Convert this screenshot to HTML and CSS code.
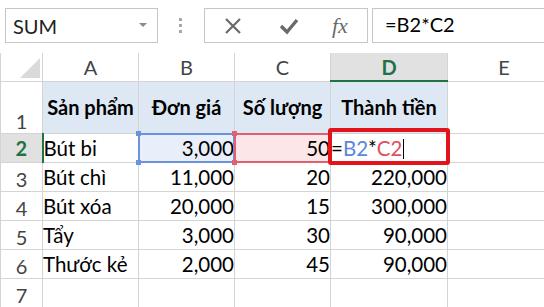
FILE: index.html
```html
<!DOCTYPE html>
<html lang="vi">
<head>
  <meta charset="UTF-8">
  <title>Excel - Thành tiền</title>
  <link rel="stylesheet" href="styles.css">
</head>
<body>
  <div class="toolbar">
    <div class="name-box">
      <span>SUM</span>
      <svg class="caret" width="8" height="5" viewBox="0 0 8 5"><path d="M0 0h8L4 4z" fill="#8a8a8a"/></svg>
    </div>
    <div class="grip"><i></i><i></i><i></i></div>
    <div class="fx-buttons">
      <svg class="btn-icon" width="18" height="18" viewBox="0 0 18 18"><path d="M2 2l14 14M16 2L2 16" stroke="#6a6a6a" stroke-width="2.2" fill="none"/></svg>
      <svg class="btn-icon" width="20" height="18" viewBox="0 0 20 18"><path d="M2 9l6 6L18 3" stroke="#6a6a6a" stroke-width="3.4" fill="none"/></svg>
      <span class="fx">fx</span>
    </div>
    <div class="formula-box">=B2*C2</div>
  </div>

  <table class="sheet">
    <colgroup>
      <col class="c-hdr">
      <col class="c-std">
      <col class="c-std">
      <col class="c-std">
      <col class="c-wide">
      <col class="c-rest">
    </colgroup>
    <thead>
      <tr class="col-heads">
        <th class="corner"><span class="tri"></span></th>
        <th>A</th>
        <th>B</th>
        <th>C</th>
        <th class="active">D</th>
        <th>E</th>
      </tr>
    </thead>
    <tbody>
      <tr class="tall">
        <th class="row-hdr">1</th>
        <td class="head">Sản phẩm</td>
        <td class="head">Đơn giá</td>
        <td class="head">Số lượng</td>
        <td class="head">Thành tiền</td>
        <td class="blank"></td>
      </tr>
      <tr>
        <th class="row-hdr active">2</th>
        <td class="data">Bút bi</td>
        <td class="data num ref-b">3,000<span class="ref blue"><i class="tl"></i><i class="tr"></i><i class="bl"></i><i class="br"></i></span></td>
        <td class="data num ref-c">50<span class="ref red"><i class="tl"></i><i class="bl"></i></span></td>
        <td class="data edit"><span class="eq">=</span><span class="b">B2</span>*<span class="c">C2</span><span class="cursor"></span><span class="edit-box"></span></td>
        <td class="blank"></td>
      </tr>
      <tr>
        <th class="row-hdr">3</th>
        <td class="data">Bút chì</td>
        <td class="data num">11,000</td>
        <td class="data num">20</td>
        <td class="data num">220,000</td>
        <td class="blank"></td>
      </tr>
      <tr>
        <th class="row-hdr">4</th>
        <td class="data">Bút xóa</td>
        <td class="data num">20,000</td>
        <td class="data num">15</td>
        <td class="data num">300,000</td>
        <td class="blank"></td>
      </tr>
      <tr>
        <th class="row-hdr">5</th>
        <td class="data">Tẩy</td>
        <td class="data num">3,000</td>
        <td class="data num">30</td>
        <td class="data num">90,000</td>
        <td class="blank"></td>
      </tr>
      <tr>
        <th class="row-hdr">6</th>
        <td class="data">Thước kẻ</td>
        <td class="data num">2,000</td>
        <td class="data num">45</td>
        <td class="data num">90,000</td>
        <td class="blank"></td>
      </tr>
      <tr>
        <th class="row-hdr">7</th>
        <td class="blank"></td>
        <td class="blank"></td>
        <td class="blank"></td>
        <td class="blank"></td>
        <td class="blank"></td>
      </tr>
    </tbody>
  </table>
</body>
</html>
```

FILE: styles.css
```css
:root {
  --grid: #d4d4d4;
  --hdr-text: #444444;
  --green: #217346;
  --head-fill: #dde8f4;
  --sel-fill: #e1e1e1;
  --blue: #6b93dc;
  --red: #e06070;
}

html, body {
  margin: 0;
  background: #ffffff;
  overflow: hidden;
}

body {
  width: 544px;
  height: 307px;
  font-family: "Lato", "Open Sans", sans-serif;
  color: #000000;
}

/* formula bar */

.toolbar {
  display: flex;
  align-items: center;
  height: 53px;
  padding: 0 0 2px 5px;
  box-sizing: border-box;
}

.name-box {
  display: flex;
  align-items: center;
  justify-content: space-between;
  width: 153px;
  height: 35px;
  box-sizing: border-box;
  border: 1px solid #c6c6c6;
  padding: 0 10px 0 7px;
  font-size: 20px;
  color: #222222;
}

.grip {
  display: flex;
  flex-direction: column;
  gap: 3px;
  margin: 0 22px 0 21px;
}

.grip i {
  display: block;
  width: 3px;
  height: 3px;
  background: #a8a8a8;
}

.fx-buttons {
  display: flex;
  align-items: center;
  width: 164px;
  height: 35px;
  box-sizing: border-box;
  border: 1px solid #c6c6c6;
  padding: 0 0 0 19px;
}

.btn-icon {
  margin-right: 37px;
}

.fx {
  font-family: "Liberation Serif", serif;
  font-style: italic;
  font-size: 22px;
  color: #6a6a6a;
  margin-left: -4px;
}

.formula-box {
  flex: 1;
  height: 35px;
  margin-left: 4px;
  box-sizing: border-box;
  border: 1px solid #c6c6c6;
  border-right: none;
  padding: 3px 0 0 12px;
  font-size: 20px;
}

/* sheet grid */

.sheet {
  table-layout: fixed;
  border-collapse: collapse;
  width: 560px;
}

.c-hdr { width: 42px; }
.c-std { width: 96px; }
.c-wide { width: 117px; }
.c-rest { width: 113px; }

.sheet th, .sheet td {
  border: 1px solid var(--grid);
  padding: 0;
  white-space: nowrap;
  overflow: visible;
}

.col-heads th {
  height: 27px;
  font-weight: normal;
  font-size: 20px;
  color: var(--hdr-text);
  border-top: none;
}

.col-heads th.active {
  background: var(--sel-fill);
  color: var(--green);
  font-weight: bold;
  border-bottom: 2px solid var(--green);
}

.corner {
  position: relative;
  border-left: none;
}

.tri {
  position: absolute;
  right: 2px;
  bottom: 3px;
  width: 0;
  height: 0;
  border-left: 20px solid transparent;
  border-bottom: 20px solid #dadada;
}

tbody tr {
  height: 29px;
}

tbody tr.tall {
  height: 52px;
}

.row-hdr {
  font-weight: normal;
  font-size: 20px;
  color: var(--hdr-text);
  vertical-align: bottom;
  text-align: center;
  padding-bottom: 1px;
  border-left: none;
}

.row-hdr.active {
  background: var(--sel-fill);
  color: var(--green);
  font-weight: bold;
  border-right: 2px solid var(--green);
  vertical-align: middle;
}

.head {
  background: var(--head-fill);
  font-weight: bold;
  font-size: 20px;
  text-align: center;
  border: 1px solid #000000;
}

.data {
  font-size: 20.5px;
  border: 1px solid #000000;
  padding: 0 3px;
}

.num {
  text-align: right;
}

/* formula references */

.ref-b, .ref-c, .edit {
  position: relative;
}

.ref-b {
  background: #e8effb;
}

.ref-c {
  background: #fce6e8;
}

.ref {
  position: absolute;
  inset: -1px -1px -1px -1px;
  border: 2px solid var(--blue);
  pointer-events: none;
}

.ref.red {
  border-color: var(--red);
  border-right: none;
}

.ref i {
  position: absolute;
  width: 5px;
  height: 5px;
  background: var(--blue);
}

.ref.red i {
  background: var(--red);
}

.ref .tl { left: -4px; top: -4px; }
.ref .tr { right: -4px; top: -4px; background: var(--red); }
.ref .bl { left: -4px; bottom: -4px; }
.ref .br { right: -4px; bottom: -4px; background: var(--red); }

.edit {
  padding-left: 5px;
}

.edit .b { color: #5b87d8; }
.edit .c { color: #e0505f; }

.cursor {
  display: inline-block;
  width: 1px;
  height: 20px;
  background: #000000;
  vertical-align: -3px;
  margin-left: 1px;
}

.edit-box {
  position: absolute;
  left: -3px;
  top: -6px;
  right: -3px;
  bottom: -3px;
  border: 4px solid #e1141c;
  border-radius: 3px;
}
```
